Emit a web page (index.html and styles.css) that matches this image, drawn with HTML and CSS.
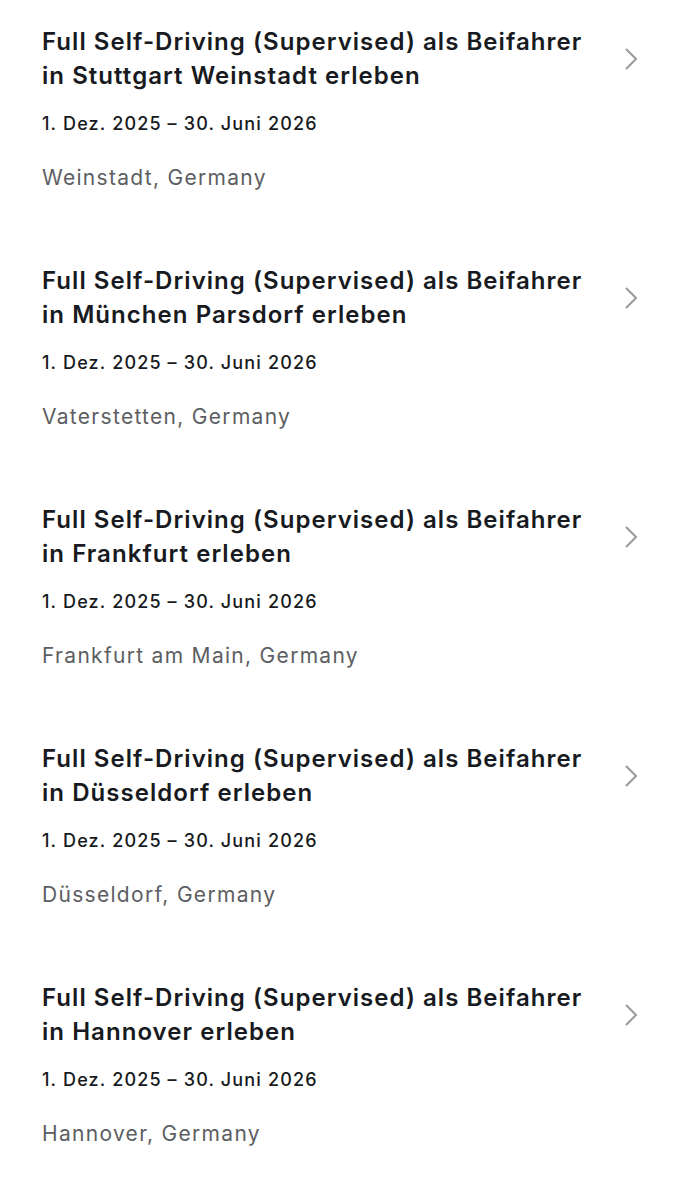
FILE: index.html
```html
<!DOCTYPE html>
<html lang="de">
<head>
    <meta charset="UTF-8">
    <meta name="viewport" content="width=device-width, initial-scale=1.0">
    <title>Veranstaltungen</title>
    <link rel="stylesheet" href="styles.css">
</head>
<body>
    <ul class="event-list">
        <li class="event">
            <div class="event-head">
                <h2 class="event-title">Full Self-Driving (Supervised) als Beifahrer in Stuttgart Weinstadt erleben</h2>
                <svg class="chevron" viewBox="0 0 12 22" width="12" height="22"><polyline points="1,1 11,11 1,21"/></svg>
            </div>
            <p class="event-date">1. Dez. 2025 – 30. Juni 2026</p>
            <p class="event-place">Weinstadt, Germany</p>
        </li>
        <li class="event">
            <div class="event-head">
                <h2 class="event-title">Full Self-Driving (Supervised) als Beifahrer in München Parsdorf erleben</h2>
                <svg class="chevron" viewBox="0 0 12 22" width="12" height="22"><polyline points="1,1 11,11 1,21"/></svg>
            </div>
            <p class="event-date">1. Dez. 2025 – 30. Juni 2026</p>
            <p class="event-place">Vaterstetten, Germany</p>
        </li>
        <li class="event">
            <div class="event-head">
                <h2 class="event-title">Full Self-Driving (Supervised) als Beifahrer in Frankfurt erleben</h2>
                <svg class="chevron" viewBox="0 0 12 22" width="12" height="22"><polyline points="1,1 11,11 1,21"/></svg>
            </div>
            <p class="event-date">1. Dez. 2025 – 30. Juni 2026</p>
            <p class="event-place">Frankfurt am Main, Germany</p>
        </li>
        <li class="event">
            <div class="event-head">
                <h2 class="event-title">Full Self-Driving (Supervised) als Beifahrer in Düsseldorf erleben</h2>
                <svg class="chevron" viewBox="0 0 12 22" width="12" height="22"><polyline points="1,1 11,11 1,21"/></svg>
            </div>
            <p class="event-date">1. Dez. 2025 – 30. Juni 2026</p>
            <p class="event-place">Düsseldorf, Germany</p>
        </li>
        <li class="event">
            <div class="event-head">
                <h2 class="event-title">Full Self-Driving (Supervised) als Beifahrer in Hannover erleben</h2>
                <svg class="chevron" viewBox="0 0 12 22" width="12" height="22"><polyline points="1,1 11,11 1,21"/></svg>
            </div>
            <p class="event-date">1. Dez. 2025 – 30. Juni 2026</p>
            <p class="event-place">Hannover, Germany</p>
        </li>
    </ul>
</body>
</html>
```

FILE: styles.css
```css
body {
    margin: 0;
    background: #fff;
    font-family: Inter, "Noto Sans", sans-serif;
    color: #171a20;
}
.event-list {
    list-style: none;
    margin: 0;
    padding: 0 0 0 42px;
}
.event {
    height: 239px;
    padding-top: 25px;
    box-sizing: border-box;
}
.event-head {
    display: flex;
    align-items: center;
}
.event-title {
    width: 562px;
    margin: 0;
    font-size: 24px;
    line-height: 34px;
    font-weight: 600;
    letter-spacing: 1.05px;
}
.chevron {
    margin-left: 21px;
    fill: none;
    stroke: #9a9a9a;
    stroke-width: 2;
}
.event-date {
    margin: 19px 0 0;
    font-size: 18px;
    line-height: 24px;
    font-weight: 500;
    letter-spacing: 1.15px;
}
.event-place {
    margin: 29px 0 0;
    font-size: 21px;
    line-height: 26px;
    color: #5c5e62;
    letter-spacing: 1.3px;
}
```
